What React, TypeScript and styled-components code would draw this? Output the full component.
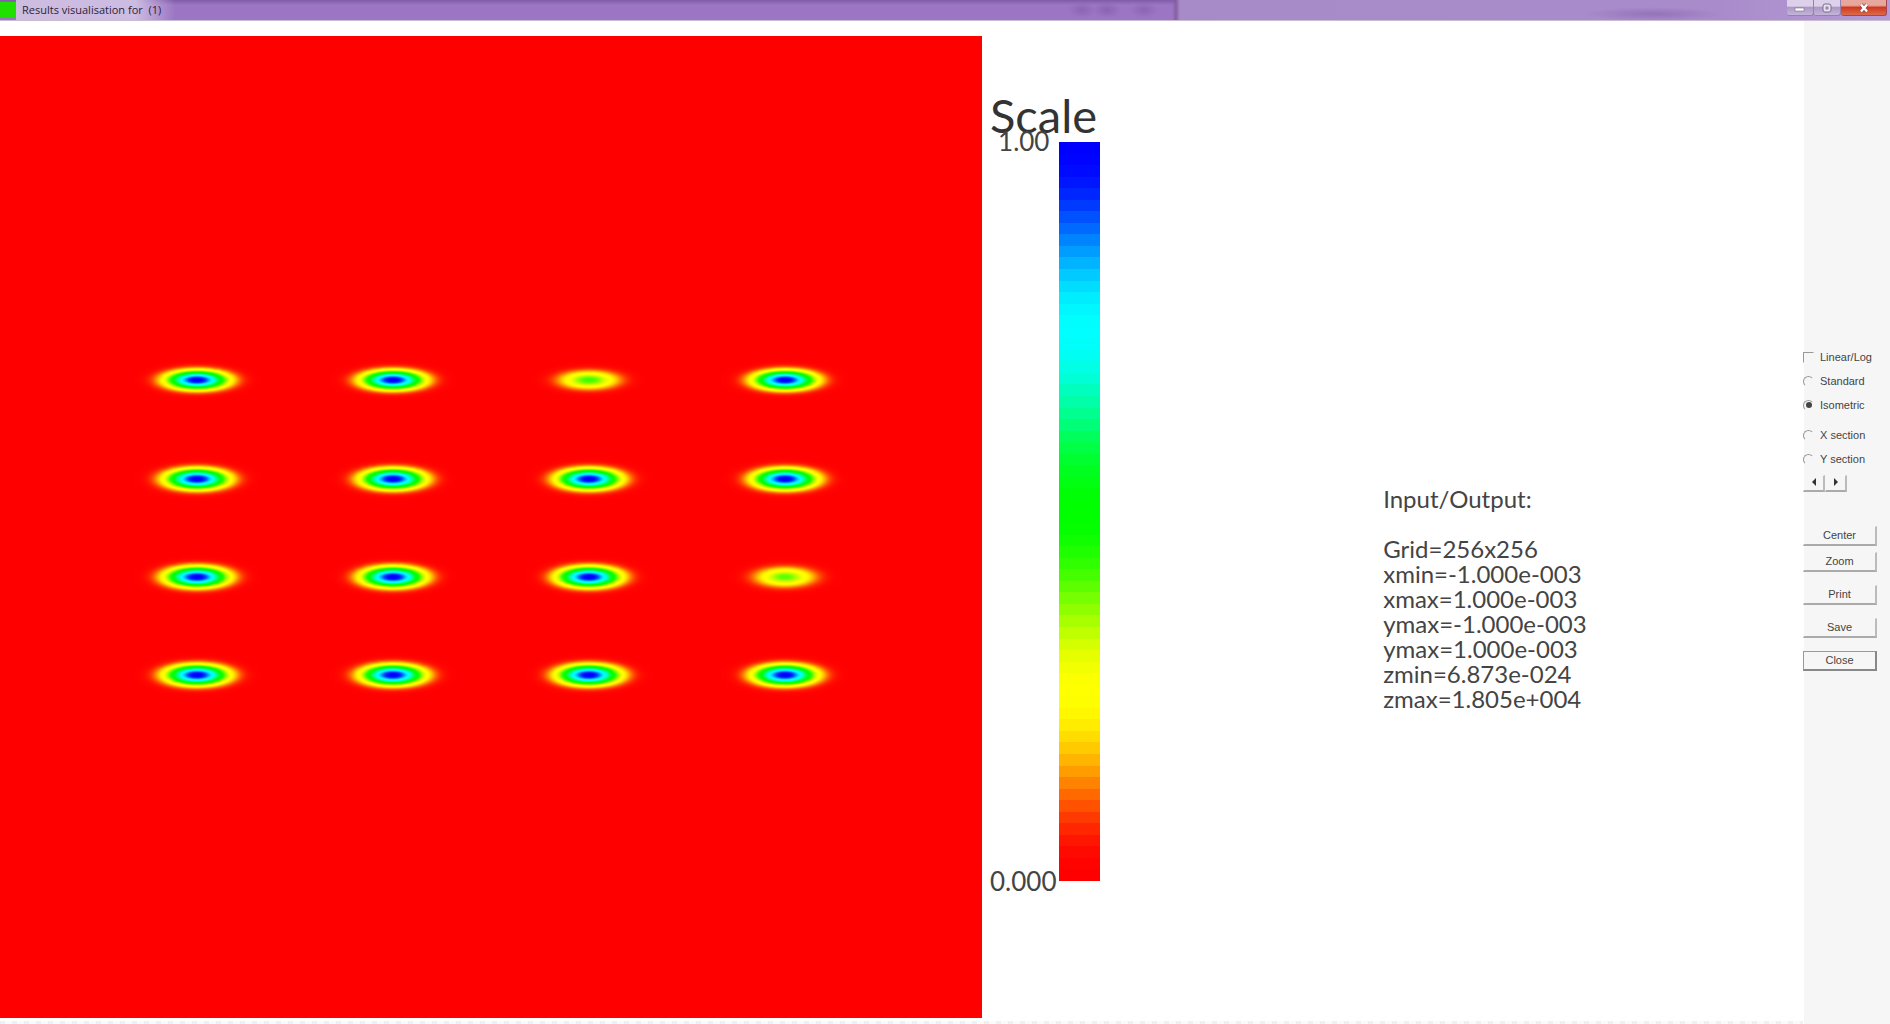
import React, { useState } from "react";
import styled, { createGlobalStyle } from "styled-components";

const GlobalStyle = createGlobalStyle`
  * { box-sizing: border-box; }
  body { margin: 0; background: #fff; }
  button, input { margin: 0; font: inherit; color: inherit; }
`;

/* ---------- colour map: red, yellow, green, cyan, blue ---------- */

const ANCHORS = [
  [255, 0, 0],
  [255, 255, 0],
  [0, 255, 0],
  [0, 255, 255],
  [0, 0, 255],
];

function colourAt(value: number): string {
  const scaled = Math.min(Math.max(value, 0), 1) * 4;
  const index = Math.min(Math.floor(scaled), 3);
  const eased = (1 - Math.cos((scaled - index) * Math.PI)) / 2;
  const from = ANCHORS[index];
  const to = ANCHORS[index + 1];
  const rgb = from.map((c, i) => Math.round(c + (to[i] - c) * eased));
  return `rgb(${rgb.join(",")})`;
}

const BANDS = 64;
const bandStops = Array.from({ length: BANDS }, (_, i) => {
  const colour = colourAt(1 - i / (BANDS - 1));
  return `${colour} ${(i / BANDS) * 100}% ${((i + 1) / BANDS) * 100}%`;
}).join(", ");

/* ---------- window ---------- */

const Window = styled.div`
  display: flex;
  flex-direction: column;
  height: 100vh;
  overflow: hidden;
  background: #fff;
  color: #444;
  font-family: "Open Sans", "Liberation Sans", sans-serif;
`;

const TitleBar = styled.header`
  display: flex;
  align-items: flex-start;
  flex: none;
  height: 21px;
  border-bottom: 1px solid #c9bdd6;
  background:
    radial-gradient(ellipse 70px 7px at 1654px 14px, rgba(110, 70, 150, 0.35), transparent),
    radial-gradient(ellipse 14px 8px at 1082px 10px, rgba(110, 70, 150, 0.35), transparent),
    radial-gradient(ellipse 14px 8px at 1107px 10px, rgba(110, 70, 150, 0.4), transparent),
    radial-gradient(ellipse 14px 8px at 1144px 10px, rgba(110, 70, 150, 0.35), transparent),
    linear-gradient(#7f5ca6, rgba(127, 92, 166, 0) 5px) 0 0 / 1176px 20px no-repeat,
    linear-gradient(90deg, #9c76c4 0, #9c76c4 1172px, #85609f 1176px, #a78bc8 1180px, #a98bcb 1720px, #b69bd5 100%);
`;

const AppIcon = styled.span`
  width: 16px;
  height: 15px;
  margin-top: 2px;
  background: #20e000;
`;

const Title = styled.h1`
  margin: 0;
  padding: 0 14px 0 6px;
  font-size: 11px;
  font-weight: 400;
  line-height: 20px;
  white-space: pre;
  color: #2c2438;
  background: linear-gradient(90deg, #cdbde0, #cdbce2 75%, rgba(208, 192, 228, 0));
`;

const WindowControls = styled.div`
  display: flex;
  margin-left: auto;
  margin-right: 3px;
`;

const ControlButton = styled.button<{ $danger?: boolean }>`
  display: grid;
  place-items: center;
  width: ${(p) => (p.$danger ? 46 : 27)}px;
  height: 16px;
  padding: 0;
  border: 1px solid ${(p) => (p.$danger ? "#a04858" : "#9680b0")};
  border-top: 0;
  border-left-width: 0;
  border-radius: 0 0 3px 3px;
  background: ${(p) =>
    p.$danger
      ? "linear-gradient(#e8a79c 0 35%, #cf3a1f 50%, #dd6a4c)"
      : "linear-gradient(#ddd0ea 0 40%, #ad98c6 50%, #c5b4da)"};
`;

const Body = styled.div`
  display: flex;
  flex: 1;
  min-height: 0;
`;

const Canvas = styled.main`
  display: flex;
  flex: 1;
  min-width: 0;
  padding: 15px 0 0;
  background: repeating-linear-gradient(90deg, #f0f0f0 0 5px, #fafafa 5px 12px) 0 100% / 100% 3px no-repeat;
`;

/* ---------- plot ---------- */

const PlotFrame = styled.figure`
  flex: none;
  height: calc(100% - 6px);
  aspect-ratio: 1;
  margin: 0;
  background: #f00;

  svg {
    display: block;
    width: 100%;
    height: 100%;
  }
`;

const COLUMNS = [197, 393, 589, 785];
const ROWS = [344, 443, 541, 639];
const SPREAD_X = 29;
const REACH = 2.4;

const PEAKS = [
  [1, 1, 0.42, 1],
  [1, 1, 1, 1],
  [1, 1, 1, 0.4],
  [1, 1, 1, 1],
];

const STOPS = Array.from({ length: 33 }, (_, i) => i / 32);

function SpotGradient({ id, peak }: { id: string; peak: number }) {
  return (
    <radialGradient id={id}>
      {STOPS.map((s) => (
        <stop key={s} offset={s} stopColor={colourAt(peak * Math.exp(-((s * REACH) ** 2)))} />
      ))}
    </radialGradient>
  );
}

function Plot() {
  return (
    <PlotFrame>
      <svg viewBox="0 0 982 982" role="img" aria-label="Intensity map">
        <defs>
          {PEAKS.flatMap((row, r) =>
            row.map((peak, c) => <SpotGradient key={`${r}${c}`} id={`spot${r}${c}`} peak={peak} />)
          )}
        </defs>
        {PEAKS.flatMap((row, r) =>
          row.map((_, c) => (
            <ellipse
              key={`${r}${c}`}
              cx={COLUMNS[c]}
              cy={ROWS[r]}
              rx={SPREAD_X * REACH}
              ry={(r === 0 ? 9 : 9.6) * REACH}
              fill={`url(#spot${r}${c})`}
            />
          ))
        )}
      </svg>
    </PlotFrame>
  );
}

/* ---------- colour scale ---------- */

const Legend = styled.section`
  display: flex;
  flex-direction: column;
  flex: none;
  width: 110px;
  margin-left: 8px;
  padding: 52px 0 143px;
  font-family: Lato, "Open Sans", sans-serif;
`;

const LegendTitle = styled.h2`
  margin: 0;
  font-size: 47px;
  font-weight: 400;
  line-height: 54px;
  color: #333;
`;

const LegendScale = styled.div`
  display: flex;
  flex: 1;
  justify-content: space-between;
`;

const LegendLabels = styled.div`
  display: flex;
  flex-direction: column;
  justify-content: space-between;
  margin: -13px 0 -12px;
  padding-right: 1px;
  font-size: 26px;
  line-height: 24px;
  text-align: right;
`;

const MaxLabel = styled.span`
  padding-right: 7px;
`;

const ColourBar = styled.div`
  width: 41px;
  background: linear-gradient(${bandStops});
`;

/* ---------- run information ---------- */

const InfoArea = styled.section`
  display: grid;
  grid-template-columns: 2fr 3fr;
  flex: 1;
  align-content: start;
  padding-top: 450px;
`;

const InfoText = styled.div`
  grid-column: 2;
  padding-left: 2px;
  font-family: Lato, "Open Sans", sans-serif;
  font-size: 24px;
  line-height: 25px;
  white-space: nowrap;
`;

const InfoHeading = styled.h2`
  margin: 0 0 25px;
  font: inherit;
`;

const InfoLine = styled.p`
  margin: 0;
`;

const INFO = [
  "Grid=256x256",
  "xmin=-1.000e-003",
  "xmax=1.000e-003",
  "ymax=-1.000e-003",
  "ymax=1.000e-003",
  "zmin=6.873e-024",
  "zmax=1.805e+004",
];

/* ---------- side panel ---------- */

const SidePanel = styled.aside`
  flex: none;
  width: 87px;
  padding-top: 324px;
  background: linear-gradient(90deg, #fff 0 1px, #f6f6f6 1px);
  font-family: "Liberation Sans", sans-serif;
  font-size: 11px;
`;

const Options = styled.div<{ $after: number }>`
  display: flex;
  flex-direction: column;
  margin-bottom: ${(p) => p.$after}px;
`;

const Option = styled.label`
  display: flex;
  align-items: center;
  gap: 6px;
  height: 24px;
  white-space: nowrap;
`;

const Mark = styled.input`
  appearance: none;
  flex: none;
  display: grid;
  place-items: center;
  width: 11px;
  height: 11px;
  border: 1px solid;
  border-color: #999 transparent transparent #999;

  &[type="radio"] {
    border-radius: 50%;
  }

  &:checked::after {
    content: "";
    width: 6px;
    height: 6px;
    border-radius: 50%;
    background: #444;
  }
`;

const Stepper = styled.div`
  display: flex;
  margin-bottom: 34px;
`;

const PushButton = styled.button<{ $small?: boolean; $focused?: boolean; $after?: number }>`
  display: grid;
  place-items: center;
  width: ${(p) => (p.$small ? "22px" : "74px")};
  height: ${(p) => (p.$small ? 17 : 20)}px;
  margin-bottom: ${(p) => p.$after ?? 0}px;
  padding: 0 0 2px;
  border: solid ${(p) => (p.$focused ? "#999" : "transparent")};
  border-width: 1px 2px 2px 1px;
  border-right-color: ${(p) => (p.$focused ? "#888" : "#bbb")};
  border-bottom-color: ${(p) => (p.$focused ? "#888" : "#aaa")};
  background: transparent;
  line-height: 14px;
`;

const MODES = ["Standard", "Isometric"];
const SECTIONS = ["X section", "Y section"];

const ACTIONS = [
  { name: "Center", after: 6 },
  { name: "Zoom", after: 13 },
  { name: "Print", after: 13 },
  { name: "Save", after: 13 },
  { name: "Close", after: 0, focused: true },
];

export default function App() {
  const [mode, setMode] = useState("Isometric");
  const [log, setLog] = useState(false);

  const radio = (name: string) => (
    <Option key={name}>
      <Mark type="radio" name="view" checked={mode === name} onChange={() => setMode(name)} />
      {name}
    </Option>
  );

  return (
    <Window>
      <GlobalStyle />
      <TitleBar>
        <AppIcon />
        <Title>{"Results visualisation for  (1)"}</Title>
        <WindowControls>
          <ControlButton aria-label="Minimize">
            <svg width="12" height="12" viewBox="0 0 12 12">
              <rect x="1" y="6" width="9" height="3" fill="#fff" stroke="#77708a" strokeWidth="0.6" />
            </svg>
          </ControlButton>
          <ControlButton aria-label="Maximize">
            <svg width="12" height="12" viewBox="0 0 12 12">
              <rect x="2" y="2" width="8" height="8" rx="2" fill="#e8e0f0" stroke="#77708a" />
              <rect x="4.5" y="4.5" width="3" height="3" fill="#9588a8" />
            </svg>
          </ControlButton>
          <ControlButton $danger aria-label="Close window">
            <svg width="12" height="12" viewBox="0 0 12 12">
              <path d="M3 2.5 9 9.5M9 2.5 3 9.5" stroke="#8c4a48" strokeWidth="4" />
              <path d="M3 2.5 9 9.5M9 2.5 3 9.5" stroke="#fff" strokeWidth="2.4" />
            </svg>
          </ControlButton>
        </WindowControls>
      </TitleBar>

      <Body>
        <Canvas>
          <Plot />
          <Legend>
            <LegendTitle>Scale</LegendTitle>
            <LegendScale>
              <LegendLabels>
                <MaxLabel>1.00</MaxLabel>
                <span>0.000</span>
              </LegendLabels>
              <ColourBar />
            </LegendScale>
          </Legend>
          <InfoArea>
            <InfoText>
              <InfoHeading>Input/Output:</InfoHeading>
              {INFO.map((line) => (
                <InfoLine key={line}>{line}</InfoLine>
              ))}
            </InfoText>
          </InfoArea>
        </Canvas>

        <SidePanel>
          <Options $after={6}>
            <Option>
              <Mark type="checkbox" checked={log} onChange={() => setLog(!log)} />
              Linear/Log
            </Option>
            {MODES.map(radio)}
          </Options>
          <Options $after={4}>{SECTIONS.map(radio)}</Options>
          <Stepper>
            <PushButton $small aria-label="Previous section">
              <svg width="6" height="8" viewBox="0 0 6 8">
                <path d="M5 0 1 4 5 8Z" fill="#333" />
              </svg>
            </PushButton>
            <PushButton $small aria-label="Next section">
              <svg width="6" height="8" viewBox="0 0 6 8">
                <path d="M1 0 5 4 1 8Z" fill="#333" />
              </svg>
            </PushButton>
          </Stepper>
          {ACTIONS.map((a) => (
            <PushButton key={a.name} $after={a.after} $focused={a.focused}>
              {a.name}
            </PushButton>
          ))}
        </SidePanel>
      </Body>
    </Window>
  );
}
